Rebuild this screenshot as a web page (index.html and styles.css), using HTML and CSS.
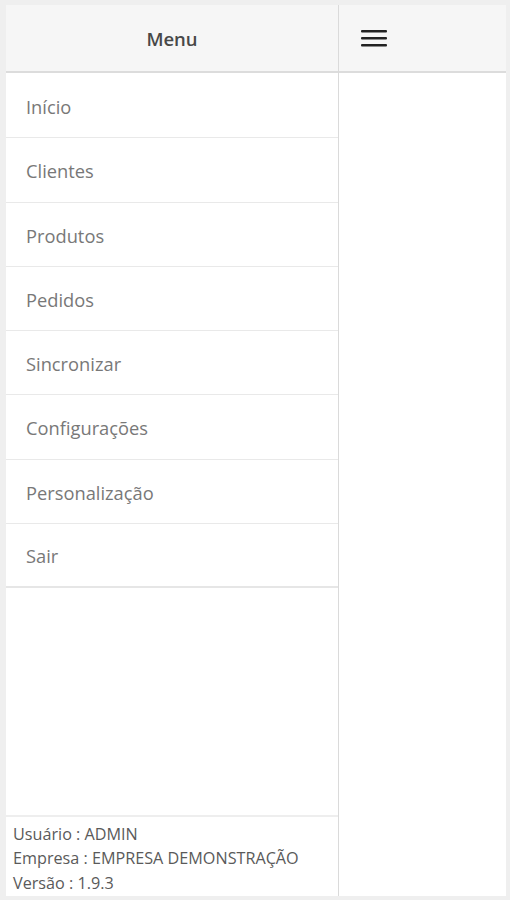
FILE: index.html
```html
<!DOCTYPE html>
<html lang="pt-BR">
<head>
    <meta charset="UTF-8">
    <meta name="viewport" content="width=device-width, initial-scale=1.0">
    <title>Menu</title>
    <link rel="stylesheet" href="styles.css">
</head>
<body>

    <div class="app">
        <div class="panel">
            <div class="panel-header">Menu</div>
            <ul class="menu">
                <li class="menu-item">Início</li>
                <li class="menu-item">Clientes</li>
                <li class="menu-item">Produtos</li>
                <li class="menu-item">Pedidos</li>
                <li class="menu-item">Sincronizar</li>
                <li class="menu-item">Configurações</li>
                <li class="menu-item">Personalização</li>
                <li class="menu-item">Sair</li>
            </ul>
            <div class="info">
                <div>Usuário : ADMIN</div>
                <div>Empresa : EMPRESA DEMONSTRAÇÃO</div>
                <div>Versão : 1.9.3</div>
            </div>
        </div>

        <div class="content">
            <div class="content-header">
                <button class="toggle" aria-label="Menu">
                    <svg width="26" height="18" viewBox="0 0 26 18">
                        <rect x="0" y="1" width="26" height="2.4" rx="1" fill="#222"/>
                        <rect x="0" y="8" width="26" height="2.4" rx="1" fill="#222"/>
                        <rect x="0" y="15" width="26" height="2.4" rx="1" fill="#222"/>
                    </svg>
                </button>
            </div>
        </div>
    </div>

</body>
</html>
```

FILE: styles.css
```css
html, body {
    height: 100%;
}
body {
    font-family: 'Open Sans', 'Noto Sans', sans-serif;
    background-color: #efefef;
    margin: 0;
    padding: 5px 4px 4px 6px;
    box-sizing: border-box;
    color: #666;
}
.app {
    display: flex;
    height: 100%;
    background: white;
}
.panel {
    width: 332px;
    display: flex;
    flex-direction: column;
    border-right: 1px solid #dadada;
}
.panel-header {
    height: 66px;
    display: flex;
    align-items: center;
    justify-content: center;
    background-color: #f6f6f6;
    border-bottom: 2px solid #dcdcdc;
    font-size: 18.5px;
    font-weight: 600;
    color: #484848;
}
.menu {
    list-style: none;
    margin: 1px 0 0;
    padding: 0;
    flex: 1;
}
.menu-item {
    height: 64.25px;
    box-sizing: border-box;
    display: flex;
    align-items: center;
    padding-left: 20px;
    padding-top: 2px;
    border-bottom: 1px solid #e9e9e9;
    font-size: 18.3px;
    color: #787878;
}
.menu-item:last-child {
    border-bottom: 2px solid #e6e6e6;
}
.info {
    border-top: 2px solid #eeeeee;
    padding: 5px 7px 1px;
    font-size: 16.2px;
    line-height: 24.5px;
    color: #5a5a5a;
}
.content {
    flex: 1;
}
.content-header {
    height: 66px;
    display: flex;
    align-items: center;
    padding-left: 22px;
    background-color: #f6f6f6;
    border-bottom: 2px solid #dcdcdc;
}
.toggle {
    background: none;
    border: none;
    padding: 0;
    display: flex;
    cursor: pointer;
}
```
